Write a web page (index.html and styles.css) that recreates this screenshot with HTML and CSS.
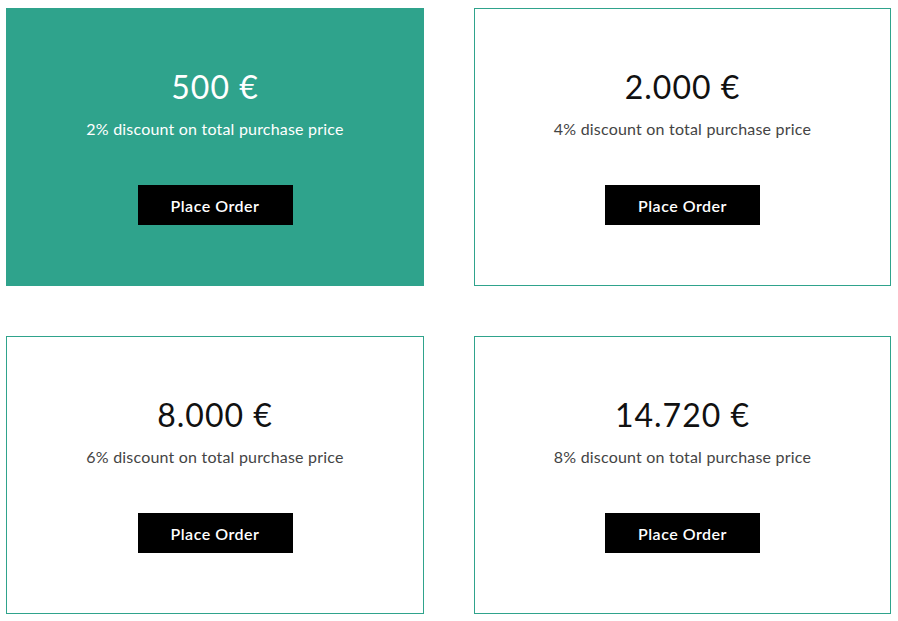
FILE: index.html
```html
<!DOCTYPE html>
<html lang="en">
<head>
    <meta charset="UTF-8">
    <meta name="viewport" content="width=device-width, initial-scale=1.0">
    <title>Order Discounts</title>
    <link rel="stylesheet" href="styles.css">
</head>
<body>
    <div class="tiers">
        <div class="tier tier-active">
            <h2 class="price">500 €</h2>
            <p class="discount">2% discount on total purchase price</p>
            <button class="order-btn">Place Order</button>
        </div>
        <div class="tier">
            <h2 class="price">2.000 €</h2>
            <p class="discount">4% discount on total purchase price</p>
            <button class="order-btn">Place Order</button>
        </div>
        <div class="tier">
            <h2 class="price">8.000 €</h2>
            <p class="discount">6% discount on total purchase price</p>
            <button class="order-btn">Place Order</button>
        </div>
        <div class="tier">
            <h2 class="price">14.720 €</h2>
            <p class="discount">8% discount on total purchase price</p>
            <button class="order-btn">Place Order</button>
        </div>
    </div>
</body>
</html>
```

FILE: styles.css
```css
body {
    font-family: Lato, "Open Sans", sans-serif;
    color: #111;
    background-color: #fff;
    margin: 0;
    padding: 8px 7px 0 6px;
}
.tiers {
    display: grid;
    grid-template-columns: 418px 417px;
    grid-auto-rows: 278px;
    column-gap: 50px;
    row-gap: 50px;
}
.tier {
    box-sizing: border-box;
    border: 1px solid #2fa38c;
    display: flex;
    flex-direction: column;
    align-items: center;
    padding: 60px 10px 0;
    text-align: center;
}
.tier-active {
    background-color: #2fa38c;
    color: #fff;
}
.price {
    margin: 0;
    font-size: 32px;
    font-weight: 400;
    line-height: 36px;
    letter-spacing: 1px;
}
.discount {
    margin: 15px 0 0;
    font-size: 16px;
    line-height: 18px;
    letter-spacing: 0.2px;
    color: #444;
}
.tier-active .discount {
    color: #fff;
}
.order-btn {
    margin-top: 47px;
    width: 155px;
    height: 40px;
    border: none;
    background-color: #000;
    color: #fff;
    font-family: inherit;
    font-size: 16px;
    font-weight: 600;
    letter-spacing: 0.5px;
    cursor: pointer;
}
```
